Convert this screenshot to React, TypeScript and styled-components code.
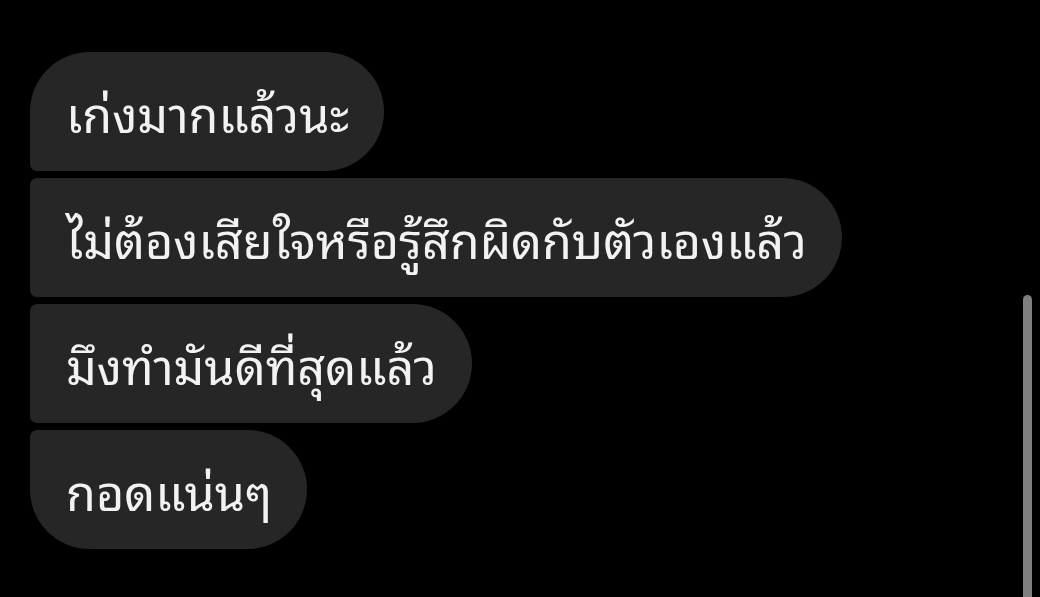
import React from "react";
import styled, { createGlobalStyle } from "styled-components";

const Global = createGlobalStyle`
  html, body { margin: 0; padding: 0; background: #000; }
  body { width: 1040px; height: 597px; overflow: hidden; }
`;

const Page = styled.div`
  position: relative;
  width: 1040px;
  height: 597px;
  background: #000;
  box-sizing: border-box;
  padding: 52px 0 0 30px;
`;

const Thread = styled.div`
  display: flex;
  flex-direction: column;
  align-items: flex-start;
  gap: 7px;
`;

type Pos = "first" | "middle" | "last";

const radius = (p: Pos) => {
  const big = "60px";
  const small = "7px";
  if (p === "first") return `${big} ${big} ${big} ${small}`;
  if (p === "last") return `${small} ${big} ${big} ${big}`;
  return `${small} ${big} ${big} ${small}`;
};

const Bubble = styled.div<{ $pos: Pos }>`
  height: 119px;
  box-sizing: border-box;
  display: flex;
  align-items: center;
  padding: 0 35px 0 36px;
  background: #262626;
  color: #f2f2f2;
  border-radius: ${(p) => radius(p.$pos)};
  font-family: "Noto Sans Thai Looped", "Noto Sans Thai", "Noto Sans", sans-serif;
  font-size: 48.5px;
  line-height: 1;
  white-space: nowrap;
`;

const ScrollThumb = styled.div`
  position: absolute;
  left: 1023px;
  top: 295px;
  width: 9px;
  bottom: -10px;
  border-radius: 5px;
  background: #7f7f7f;
`;

const messages: { text: string; pos: Pos }[] = [
  { text: "เก่งมากแล้วนะ", pos: "first" },
  { text: "ไม่ต้องเสียใจหรือรู้สึกผิดกับตัวเองแล้ว", pos: "middle" },
  { text: "มึงทำมันดีที่สุดแล้ว", pos: "middle" },
  { text: "กอดแน่นๆ", pos: "last" },
];

export default function App() {
  return (
    <>
      <Global />
      <Page>
        <Thread>
          {messages.map((m, i) => (
            <Bubble key={i} $pos={m.pos}>
              {m.text}
            </Bubble>
          ))}
        </Thread>
        <ScrollThumb />
      </Page>
    </>
  );
}
